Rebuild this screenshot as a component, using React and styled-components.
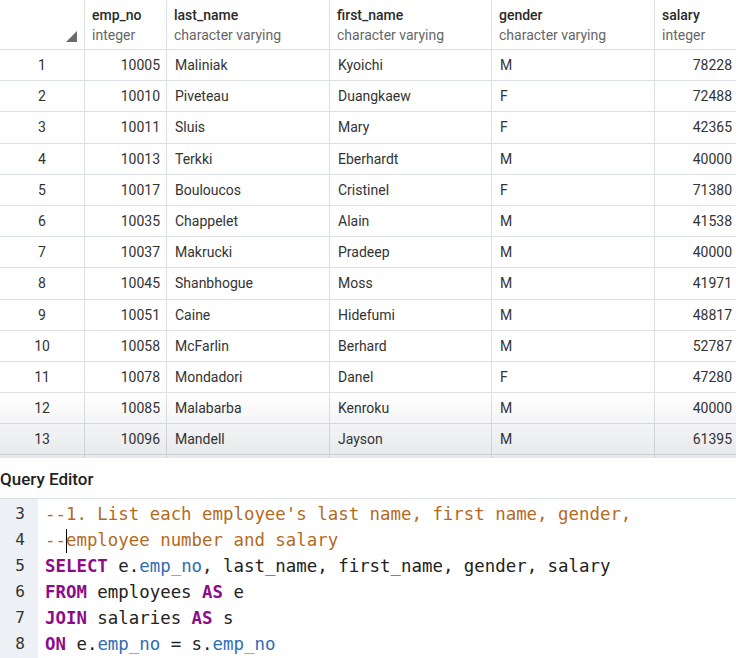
import React from "react";
import styled, { createGlobalStyle } from "styled-components";

const GlobalStyle = createGlobalStyle`
  body {
    margin: 0;
    background: #ffffff;
    font-family: Roboto, "Liberation Sans", sans-serif;
  }
`;

const COLS = "85px 82px 163px 162px 163px 1fr";

const Page = styled.div`
  width: 736px;
  height: 658px;
  overflow: hidden;
  display: flex;
  flex-direction: column;
`;

const GridWrap = styled.div`
  position: relative;
  height: 458px;
  overflow: hidden;
  flex-shrink: 0;

  &::after {
    content: "";
    position: absolute;
    left: 0;
    right: 0;
    bottom: 0;
    height: 66px;
    background: linear-gradient(to bottom, rgba(0, 0, 0, 0), rgba(40, 50, 70, 0.11));
    pointer-events: none;
  }
`;

const Row = styled.div`
  display: grid;
  grid-template-columns: ${COLS};
  height: ${(p) => (p.$head ? "49px" : "30.2px")};
  border-bottom: 1px solid #dde1e7;
  color: #333;
  font-size: 14px;
`;

const Cell = styled.div`
  border-right: 1px solid #dde1e7;
  display: flex;
  align-items: center;
  justify-content: ${(p) => (p.$align === "right" ? "flex-end" : p.$align === "center" ? "center" : "flex-start")};
  padding: 0 ${(p) => (p.$align === "right" ? "6px" : "0")} 0 ${(p) => (p.$align === "left" ? "8px" : "0")};
  white-space: nowrap;
  overflow: hidden;

  &:last-child {
    border-right: none;
    padding-right: 4px;
  }
`;

const HeadCell = styled.div`
  border-right: 1px solid #dde1e7;
  display: flex;
  flex-direction: column;
  justify-content: center;
  padding: 2px 0 0 7px;
  position: relative;

  &:last-child {
    border-right: none;
  }
`;

const ColName = styled.span`
  font-weight: 500;
  color: #2a2a2a;
  font-size: 14px;
  line-height: 19px;
`;

const ColType = styled.span`
  color: #666;
  font-size: 14px;
  line-height: 20px;
`;

const SortMark = styled.svg`
  position: absolute;
  right: 7px;
  bottom: 7px;
`;

const EditorTitle = styled.div`
  height: 39px;
  display: flex;
  align-items: center;
  font-size: 17px;
  font-weight: 500;
  color: #222;
  border-bottom: 1px solid #dde1e7;
  padding-top: 1px;
`;

const Editor = styled.div`
  display: grid;
  grid-template-columns: 38px 1fr;
  flex: 1;
  padding-top: 2px;
  font-family: "DejaVu Sans Mono", "Liberation Mono", monospace;
  font-size: 17.4px;
`;

const Gutter = styled.div`
  background: #edf0f4;
  margin-top: -2px;
  padding-top: 2px;
`;

const LineNo = styled.div`
  height: 26px;
  line-height: 26px;
  text-align: right;
  padding-right: 13px;
  color: #333;
  font-size: 16px;
`;

const Code = styled.div`
  padding-left: 7px;
`;

const Line = styled.div`
  height: 26px;
  line-height: 26px;
  color: #222;
  white-space: pre;
`;

const Comment = styled.span`
  color: #b36a21;
`;

const Kw = styled.span`
  color: #8c0c88;
  font-weight: bold;
`;

const Prop = styled.span`
  color: #2e6db3;
`;

const Cursor = styled.span`
  display: inline-block;
  width: 0;
  height: 24px;
  border-left: 1px solid #000;
  vertical-align: middle;
  margin-right: -1px;
`;

const columns = [
  ["emp_no", "integer"],
  ["last_name", "character varying"],
  ["first_name", "character varying"],
  ["gender", "character varying"],
  ["salary", "integer"],
];

const rows = [
  [10005, "Maliniak", "Kyoichi", "M", 78228],
  [10010, "Piveteau", "Duangkaew", "F", 72488],
  [10011, "Sluis", "Mary", "F", 42365],
  [10013, "Terkki", "Eberhardt", "M", 40000],
  [10017, "Bouloucos", "Cristinel", "F", 71380],
  [10035, "Chappelet", "Alain", "M", 41538],
  [10037, "Makrucki", "Pradeep", "M", 40000],
  [10045, "Shanbhogue", "Moss", "M", 41971],
  [10051, "Caine", "Hidefumi", "M", 48817],
  [10058, "McFarlin", "Berhard", "M", 52787],
  [10078, "Mondadori", "Danel", "F", 47280],
  [10085, "Malabarba", "Kenroku", "M", 40000],
  [10096, "Mandell", "Jayson", "M", 61395],
  ["", "", "", "", ""],
];

export default function App() {
  return (
    <Page>
      <GlobalStyle />
      <GridWrap>
        <Row $head>
          <HeadCell>
            <SortMark width="11" height="11" viewBox="0 0 11 11">
              <polygon points="11,0 11,11 0,11" fill="#6b6b6b" />
            </SortMark>
          </HeadCell>
          {columns.map(([name, type]) => (
            <HeadCell key={name}>
              <ColName>{name}</ColName>
              <ColType>{type}</ColType>
            </HeadCell>
          ))}
        </Row>
        {rows.map((r, i) => (
          <Row key={i}>
            <Cell $align="center">{r[0] === "" ? "" : i + 1}</Cell>
            <Cell $align="right">{r[0]}</Cell>
            <Cell $align="left">{r[1]}</Cell>
            <Cell $align="left">{r[2]}</Cell>
            <Cell $align="left">{r[3]}</Cell>
            <Cell $align="right">{r[4]}</Cell>
          </Row>
        ))}
      </GridWrap>
      <EditorTitle>Query Editor</EditorTitle>
      <Editor>
        <Gutter>
          {[3, 4, 5, 6, 7, 8].map((n) => (
            <LineNo key={n}>{n}</LineNo>
          ))}
        </Gutter>
        <Code>
          <Line>
            <Comment>--1. List each employee's last name, first name, gender,</Comment>
          </Line>
          <Line>
            <Comment>
              --<Cursor />employee number and salary
            </Comment>
          </Line>
          <Line>
            <Kw>SELECT</Kw> e.<Prop>emp_no</Prop>, last_name, first_name, gender, salary
          </Line>
          <Line>
            <Kw>FROM</Kw> employees <Kw>AS</Kw> e
          </Line>
          <Line>
            <Kw>JOIN</Kw> salaries <Kw>AS</Kw> s
          </Line>
          <Line>
            <Kw>ON</Kw> e.<Prop>emp_no</Prop> = s.<Prop>emp_no</Prop>
          </Line>
        </Code>
      </Editor>
    </Page>
  );
}
